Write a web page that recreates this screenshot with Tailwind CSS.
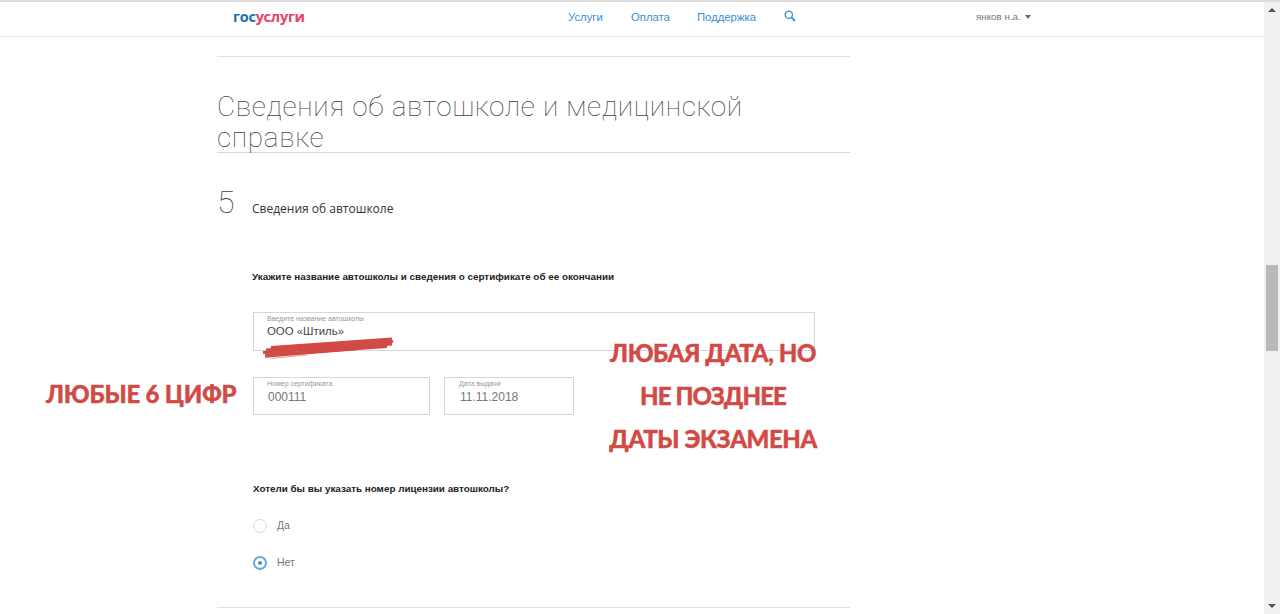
<!DOCTYPE html>
<html lang="ru">
<head>
<meta charset="utf-8">
<title>Госуслуги</title>
<script src="https://cdn.jsdelivr.net/npm/@tailwindcss/browser@4"></script>
</head>
<body class="h-[614px] overflow-hidden bg-white font-['Liberation_Sans',sans-serif]">
<div class="flex h-[614px]">
  <div class="relative flex-1 min-w-0">
    <!-- header -->
    <header class="flex h-[37px] items-center border-t-2 border-b border-t-[#dcdcdc] border-b-[#e8e8e8] pb-[3px]">
      <a class="ml-[233px] w-[335px] font-['Open_Sans',sans-serif] text-[14.5px] font-bold leading-none tracking-[-0.25px]"><span class="text-[#1f6db2]">гос</span><span class="text-[#e9415f]">услуги</span></a>
      <nav class="flex items-center text-[11.3px] text-[#3b8fd0]">
        <a class="w-[63px]">Услуги</a>
        <a class="w-[66px]">Оплата</a>
        <a class="w-[87px]">Поддержка</a>
        <svg class="mb-[3px] h-[12px] w-[12px]" viewBox="0 0 12 12" fill="none" stroke="#3b8fd0"><circle cx="4.8" cy="4.8" r="3.6" stroke-width="1.3"/><path d="M7.6 7.6 11 11" stroke-width="1.8"/></svg>
      </nav>
      <div class="ml-[180px] flex items-center gap-[4px] text-[9.8px] text-[#777]">
        <span>янков н.а.</span>
        <span class="mb-[2px] h-0 w-0 border-x-[3px] border-t-[4px] border-x-transparent border-t-[#666]"></span>
      </div>
    </header>

    <main class="ml-[217px] w-[633px]">
      <div class="mt-[19px] border-t border-[#e0e0e0]"></div>
      <h1 class="mt-[34px] h-[62px] border-b border-[#d8d8d8] font-['Roboto',sans-serif] text-[28px] font-thin leading-[31px] tracking-[0.66px] text-[#444]">Сведения об автошколе и медицинской справке</h1>

      <div class="mt-[31px] flex items-end">
        <span class="w-[35px] font-['Roboto',sans-serif] text-[32px] font-thin leading-[37px] text-[#444]">5</span>
        <h2 class="pb-[3px] font-['Open_Sans',sans-serif] text-[12px] leading-[18px] text-[#333]">Сведения об автошколе</h2>
      </div>

      <div class="ml-[36px] mt-[49px]">
        <p class="-ml-[1px] text-[9.87px] font-bold leading-[14px] text-[#222]">Укажите название автошколы и сведения о сертификате об ее окончании</p>

        <div class="relative mt-[28px] h-[39px] w-[562px] border border-[#d5d8da] pl-[13px] pt-[2px]">
          <div class="text-[7px] leading-[8px] text-[#999]">Введите название автошколы</div>
          <div class="mt-[1px] text-[11.4px] leading-[14px] text-[#444]">ООО «Штиль»</div>
        </div>

        <div class="mt-[26px] flex gap-[14px]">
          <div class="h-[38px] w-[177px] border border-[#d5d8da] pl-[13px] pt-[1px]">
            <div class="text-[7px] leading-[9px] text-[#999]">Номер сертификата</div>
            <div class="ml-[1px] mt-[2px] text-[12px] leading-[14px] text-[#777]">000111</div>
          </div>
          <div class="h-[38px] w-[130px] border border-[#d5d8da] pl-[14px] pt-[1px]">
            <div class="text-[7px] leading-[9px] text-[#999]">Дата выдачи</div>
            <div class="ml-[1px] mt-[2px] text-[12px] leading-[14px] text-[#777]">11.11.2018</div>
          </div>
        </div>

        <p class="mt-[67px] text-[9.85px] font-bold leading-[14px] text-[#222]">Хотели бы вы указать номер лицензии автошколы?</p>

        <div class="mt-[23px] flex h-[14px] items-center gap-[10px]">
          <span class="h-[14px] w-[14px] rounded-full border border-[#d8d8d8]"></span>
          <span class="text-[10.5px] text-[#777]">Да</span>
        </div>
        <div class="mt-[23px] flex h-[14px] items-center gap-[10px]">
          <span class="flex h-[14px] w-[14px] items-center justify-center rounded-full border-2 border-[#6aaad8]"><span class="h-[4px] w-[4px] rounded-full bg-[#4f8fc0]"></span></span>
          <span class="text-[10.5px] text-[#777]">Нет</span>
        </div>
      </div>

      <div class="mt-[37px] border-t border-[#e0e0e0]"></div>
    </main>

    <!-- red marks drawn over the form -->
    <svg class="absolute left-[257px] top-[336px] blur-[0.4px]" width="138" height="24" viewBox="0 0 138 24" fill="none" stroke="#d24a45" stroke-linecap="butt">
      <path d="M14 11.5 135 3" stroke-width="2.8"/>
      <path d="M9 14 136 5.5" stroke-width="3.2"/>
      <path d="M6 16.5 135 8" stroke-width="3"/>
      <path d="M8 19 130 10.5" stroke-width="2.8"/>
      <path d="M8 21 100 13.5" stroke-width="1.6"/>
      <path d="M14 22.5 50 19" stroke-width="1" opacity=".5"/>
    </svg>
    <div class="absolute left-[46px] top-[380px] font-['Lato',sans-serif] text-[24px] font-black leading-[28px] tracking-[-0.2px] text-[#d24a45] [-webkit-text-stroke:0.4px_#d24a45]">ЛЮБЫЕ 6 ЦИФР</div>
    <div class="absolute left-[600px] top-[331px] w-[226px] text-center font-['Lato',sans-serif] text-[24px] font-black leading-[43px] tracking-[-0.4px] text-[#d24a45] [-webkit-text-stroke:0.4px_#d24a45]">
      <div>ЛЮБАЯ ДАТА, НО</div>
      <div class="tracking-[-0.9px]">НЕ ПОЗДНЕЕ</div>
      <div>ДАТЫ ЭКЗАМЕНА</div>
    </div>
  </div>

  <!-- scrollbar -->
  <aside class="flex w-[16px] flex-col items-center justify-between border-t-2 border-t-[#dcdcdc] bg-[#f1f1f1] py-[6px]">
    <span class="h-0 w-0 border-x-[4px] border-b-[4px] border-x-transparent border-b-[#505050]"></span>
    <span class="mb-[4px] h-[86px] w-[12px] translate-y-[2px] bg-[#b9b9b9]"></span>
    <span class="h-0 w-0 border-x-[4px] border-t-[4px] border-x-transparent border-t-[#505050]"></span>
  </aside>
</div>
</body>
</html>
